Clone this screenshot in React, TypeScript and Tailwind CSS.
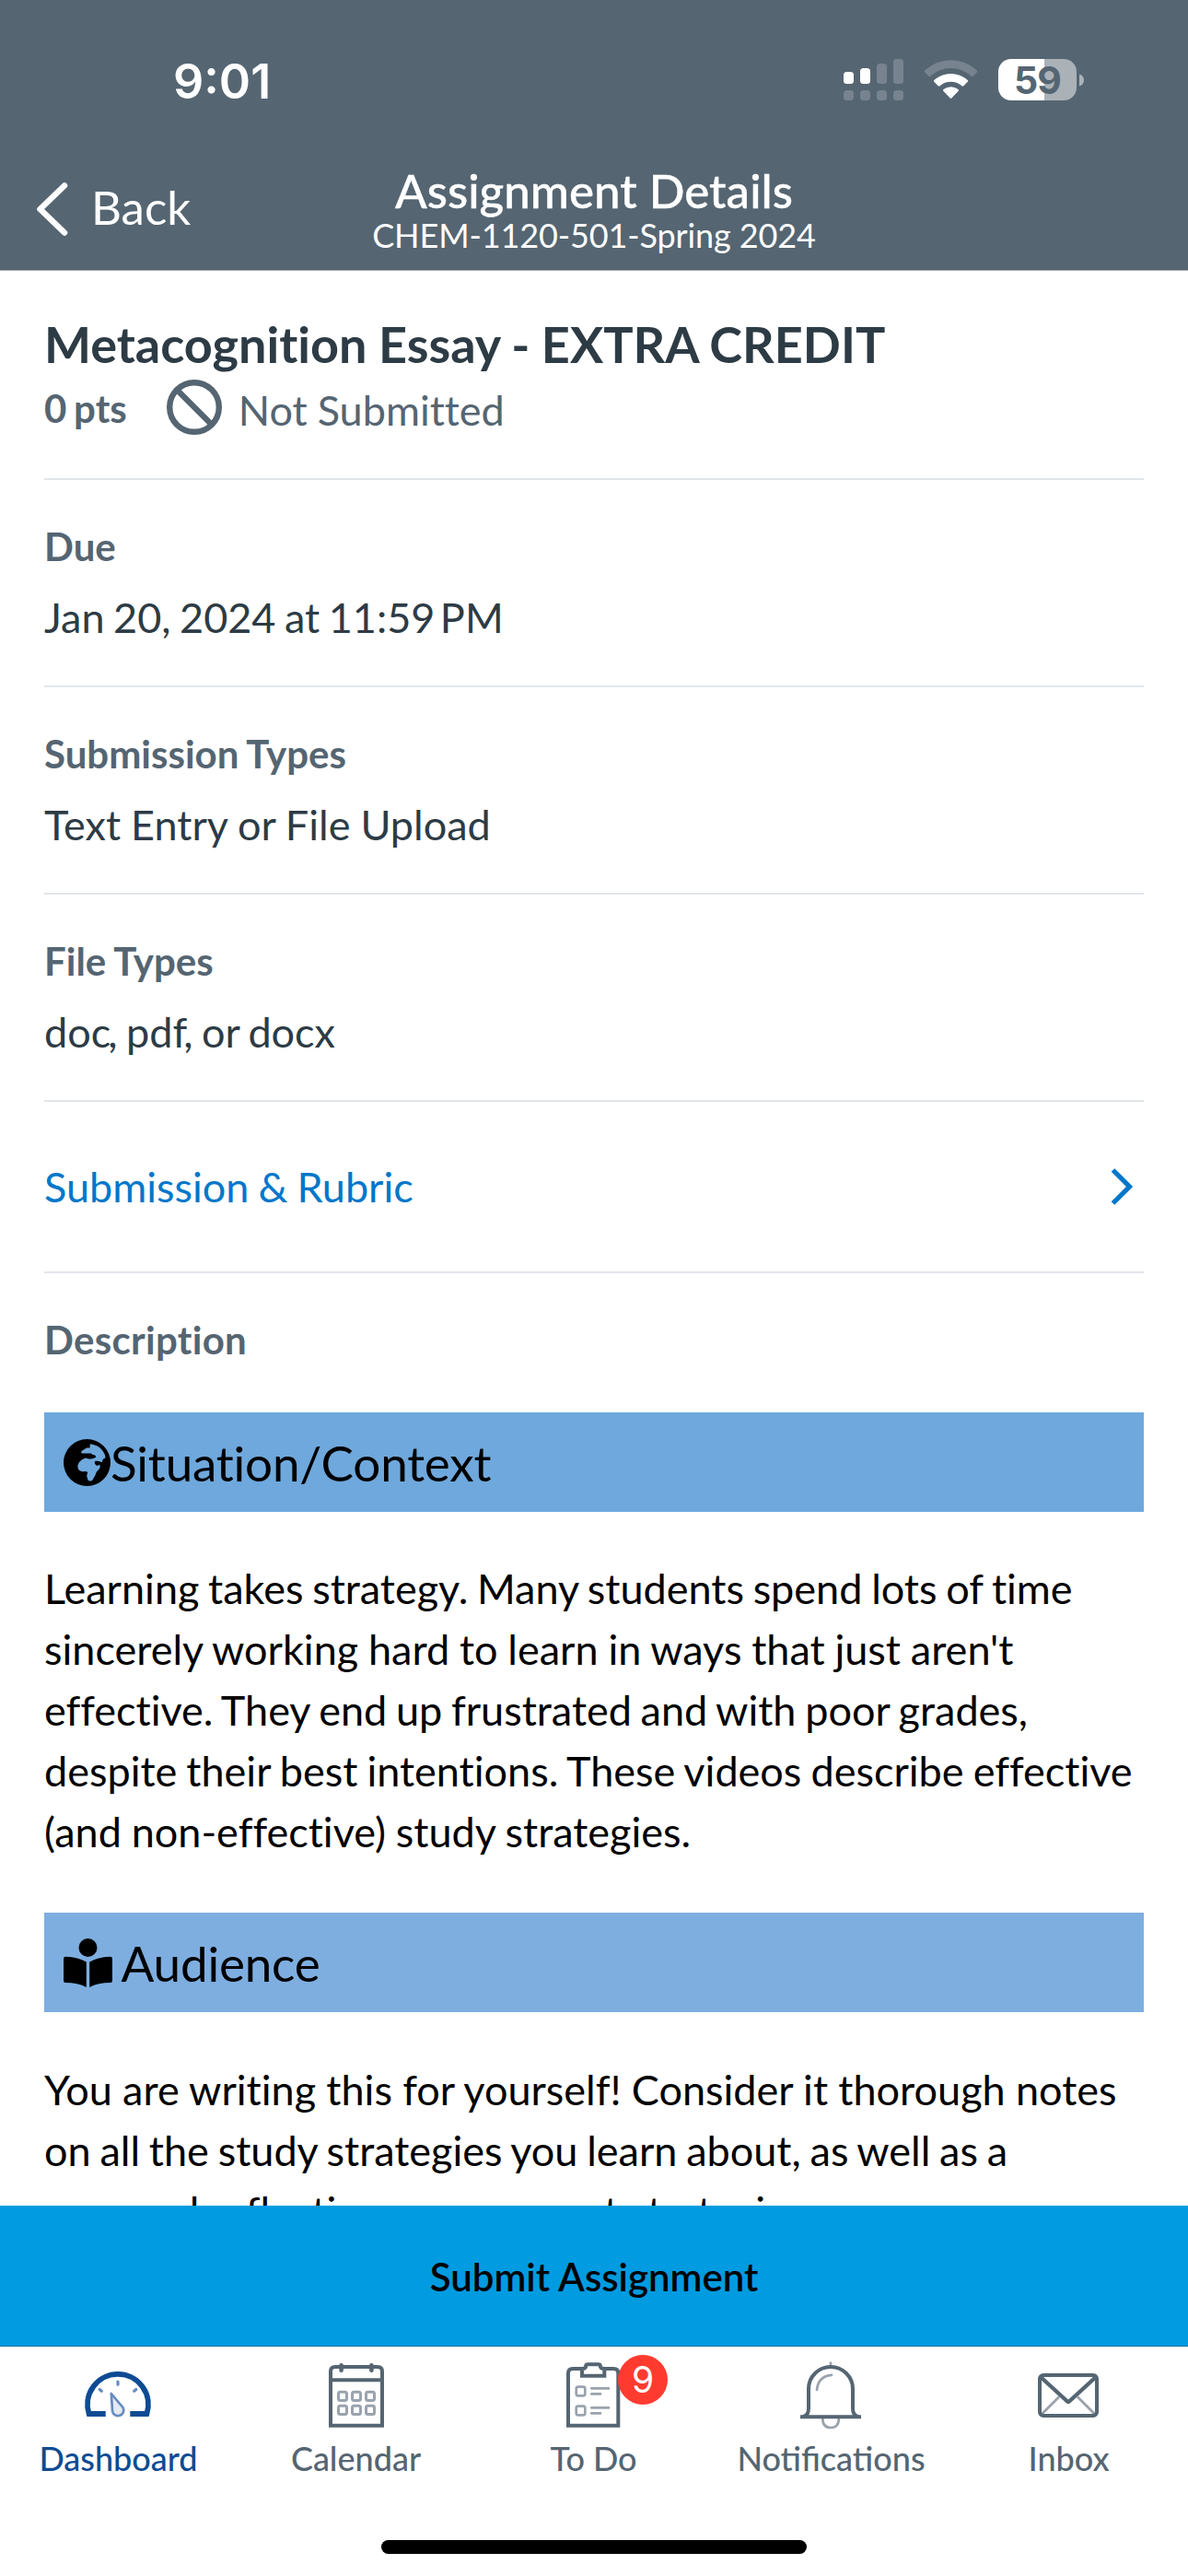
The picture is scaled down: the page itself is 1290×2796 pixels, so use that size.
import { FC, ReactNode } from "react";

import clsx from "clsx";

type SectionProps = {
  label: string;
  children: ReactNode;
};

type BannerProps = {
  icon: ReactNode;
  title: string;
  className: string;
};

type TabProps = {
  label: string;
  icon: ReactNode;
  active?: boolean;
  badge?: number;
};

const StatusIcons = () => (
  <svg width="262" height="46" viewBox="0 0 262 46" className="mt-[64px]">
    <g fill="#fff">
      <rect x="0" y="14" width="11" height="13" rx="3.5" />
      <rect x="18" y="10" width="11" height="17" rx="3.5" />
      <g fillOpacity="0.2">
        <rect x="36" y="5" width="11" height="22" rx="3.5" />
        <rect x="54" y="0" width="11" height="27" rx="3.5" />
        <rect x="0" y="34" width="11" height="11" rx="3.5" />
        <rect x="18" y="34" width="11" height="11" rx="3.5" />
        <rect x="36" y="34" width="11" height="11" rx="3.5" />
        <rect x="54" y="34" width="11" height="11" rx="3.5" />
        <path d="M88.4 14.7Q87 13.4 88.6 12A41.5 41.5 0 0 1 144.4 12Q146 13.4 144.6 14.7L140.6 18.7Q139.6 19.6 138.4 18.6A32.5 32.5 0 0 0 94.6 18.6Q93.4 19.6 92.4 18.7Z" />
      </g>
      <path d="M98.3 24.8Q97.4 23.8 98.5 22.8A27 27 0 0 1 134.5 22.8Q135.6 23.8 134.7 24.8L130.3 29.2Q129.4 30 128.4 29.2A18 18 0 0 0 104.6 29.2Q103.6 30 102.7 29.2Z" />
      <path d="M108.3 34.7Q107.6 33.8 108.5 33.1A12.6 12.6 0 0 1 124.5 33.1Q125.4 33.8 124.7 34.7L117.3 42.4Q116.5 43.2 115.7 42.4Z" />
    </g>
    <clipPath id="battery">
      <rect x="168" y="0" width="85" height="45" rx="14" />
    </clipPath>
    <g clipPath="url(#battery)">
      <rect x="168" y="0" width="50" height="45" fill="#fff" />
      <rect x="218" y="0" width="35" height="45" fill="#aab2b8" />
    </g>
    <path d="M256 16.5Q261 18 261 23T256 29.5Z" fill="#aab2b8" />
    <text
      x="210.5"
      y="37.5"
      textAnchor="middle"
      className="fill-[#556572] font-[Inter,sans-serif] text-[41px] font-bold tracking-[-1px]"
    >
      59
    </text>
  </svg>
);

const GlobeIcon = () => (
  <svg width="51" height="51" viewBox="87 98 152 152">
    <path
      fillRule="evenodd"
      d="M163 98a76 76 0 1 0 0 152a76 76 0 1 0 0-152Z
        M173 114Q200 118 212 134Q222 146 223 158L215 163L211 173Q202 167 190 169L187 175L192 183L199 184L204 180Q207 186 203 194Q191 205 190 214L180 231Q172 237 166 230L162 217L165 206Q162 200 152 203Q140 204 134 194Q131 182 137 173Q146 162 158 159L166 161Q180 164 192 157Q192 150 182 149L176 144H146Q141 139 150 134L162 126H172Z"
    />
  </svg>
);

const ReaderIcon = () => (
  <svg width="53" height="53" viewBox="0 0 53 53">
    <circle cx="26.5" cy="10" r="10" />
    <path d="M0 22Q0 19.8 2.4 19.8Q16 20.3 24.8 25.5V53Q16 48 2 48Q0 48 0 45.5Z" />
    <path d="M53 22Q53 19.8 50.6 19.8Q37 20.3 28.2 25.5V53Q37 48 51 48Q53 48 53 45.5Z" />
  </svg>
);

const DashboardIcon = () => (
  <svg width="80" height="80" viewBox="-40 0 80 80" fill="none">
    <path d="M-14.3 60H-32.4A33 33 0 1 1 30.4 60H12.3" stroke="#0e4b93" strokeWidth="5.8" />
    <g stroke="#668cbf" strokeLinecap="round" strokeWidth="3.2">
      <path d="M-1 25V28.2M-20.8 33.5L-18.7 35.3M18.8 33.5L16.7 35.3" />
    </g>
    <path
      d="M-8.2 38L-6.9 57.5A6.2 6.2 0 1 0 4.8 53.5Z"
      fill="#e4eaf3"
      stroke="#668cbf"
      strokeWidth="2.7"
      strokeLinejoin="round"
    />
  </svg>
);

const CalendarIcon = () => (
  <svg width="80" height="80" viewBox="-40 0 80 80" fill="none" stroke="#556572">
    <path d="M-28 72.8V14Q-28 9 -23 9H23Q28 9 28 14V72.8ZM-28 23.3H28" strokeWidth="4" />
    <path d="M-16.4 7.2V12.8M16.4 7.2V12.8" strokeWidth="4.6" strokeLinecap="round" />
    <g stroke="#9aa3ad" strokeWidth="3">
      {[36.2, 51.2].map((y) =>
        [-19.5, -4.5, 10.5].map((x) => (
          <rect key={`${x}-${y}`} x={x} y={y} width="9" height="9.2" rx="2" />
        )),
      )}
    </g>
  </svg>
);

const TodoIcon = () => (
  <svg width="80" height="80" viewBox="-40 0 80 80" fill="none" stroke="#556572" strokeWidth="4">
    <path d="M-14 11H-23Q-28 11 -28 16V72.8H26.3V16Q26.3 11 21.3 11H12" />
    <path d="M-13 18.8V11Q-8.8 11 -8.8 8Q-8.8 6.3 -6.5 6.3H4.5Q6.8 6.3 6.8 8Q6.8 11 11.3 11V18.8Z" />
    <g stroke="#9aa3ad" strokeWidth="2.7">
      <rect x="-19.3" y="30.7" width="9.6" height="9.6" rx="2" />
      <rect x="-19.3" y="51.7" width="9.6" height="9.6" rx="2" />
      <path strokeLinecap="round" d="M-2.7 32.4H16M-2.7 38.4H7M-2.7 53.4H16M-2.7 59.4H7" />
    </g>
  </svg>
);

const BellIcon = () => (
  <svg width="80" height="80" viewBox="-40 0 80 80" fill="none" stroke="#556572" strokeWidth="4">
    <g stroke="#9aa3ad" strokeWidth="2.7">
      <path d="M-1 3.5V8" />
      <path strokeLinecap="round" d="M0 17.8Q-14.5 19 -16 34M-9.7 65Q-9.7 75 -1 75T7.9 65" />
    </g>
    <path d="M-34 63.2H32M-31 63Q-25 62 -25 54V33A24 24 0 0 1 23 33V54Q23 62 29 63" />
  </svg>
);

const InboxIcon = () => (
  <svg width="80" height="80" viewBox="-40 0 80 80" fill="none" stroke="#556572" strokeWidth="4">
    <path d="M-31 61.5L-11 41.5M29 61.5L9 41.5" stroke="#9aa3ad" strokeWidth="2.8" />
    <rect x="-32" y="18" width="62" height="44" rx="4" />
    <path d="M-31 20L-2.6 46Q-1 47.6 0.6 46L29 20" strokeWidth="4.4" />
  </svg>
);

const Section: FC<SectionProps> = ({ label, children }) => (
  <section className="h-[225px] border-b-2 border-[#e2e6ea] pt-[47px]">
    <h2 className="text-[42px] leading-[50px] font-bold text-[#556572] [word-spacing:-1px]">{label}</h2>
    <p className="mt-[25px] text-[45px] leading-[54px]">{children}</p>
  </section>
);

const Banner: FC<BannerProps> = ({ icon, title, className }) => (
  <h3
    className={clsx(
      "flex h-[108px] items-center pl-[21px] text-[53px] leading-[61px] tracking-[-0.2px] text-black",
      className,
    )}
  >
    {icon}
    <span className="[word-spacing:-2px]">{title}</span>
  </h3>
);

const Tab: FC<TabProps> = ({ label, icon, active, badge }) => (
  <div
    className={clsx(
      "relative flex flex-1 flex-col items-center pt-[13px]",
      active ? "text-[#0e4b93]" : "text-[#556572]",
    )}
  >
    {icon}
    <span className="mt-[6px] mr-px text-[36px] leading-[44px] font-medium">{label}</span>
    {badge ? (
      <span className="absolute top-[9px] left-[155px] flex size-[54px] items-center justify-center rounded-full bg-[#ff3b30] font-[Inter,sans-serif] text-[39px] text-white">
        {badge}
      </span>
    ) : null}
  </div>
);

const App = () => {
  return (
    <div className="flex h-[2796px] w-[1290px] flex-col overflow-hidden bg-white font-[Lato,sans-serif] text-[#2d3b45]">
      <header className="h-[294px] shrink-0 border-b border-[#a5adb4] bg-[#556572] text-white">
        <div className="flex h-[172px] justify-between pr-[112px] pl-[188px]">
          <span className="mt-[58px] font-[Inter,sans-serif] text-[52px] leading-[62px] font-semibold">9:01</span>
          <StatusIcons />
        </div>
        <div className="grid h-[121px] grid-cols-[1fr_auto_1fr]">
          <div className="flex items-start pl-[39px]">
            <svg width="36" height="60" viewBox="0 0 36 60" fill="none" className="mt-[25px]">
              <path
                d="M31 4.5L4.5 30L31 55.5"
                stroke="#fff"
                strokeWidth="6.5"
                strokeLinecap="round"
                strokeLinejoin="round"
              />
            </svg>
            <span className="mt-[22px] ml-[24px] text-[51px] leading-[61px]">Back</span>
          </div>
          <div className="flex flex-col items-center pt-[4px]">
            <h1 className="text-[51px] leading-[61px] font-medium tracking-[0.05px] [-webkit-text-stroke:0.4px_white]">
              Assignment Details
            </h1>
            <p className="mt-[-3px] text-[36px] leading-[43px] tracking-[-0.12px]">CHEM-1120-501-Spring 2024</p>
          </div>
          <div />
        </div>
      </header>

      <main className="h-[2100px] shrink-0 overflow-hidden px-12 [font-variant-ligatures:none]">
        <section className="h-[227px] border-b-2 border-[#e2e6ea] pt-[48px]">
          <h2 className="text-[54px] leading-[64px] font-bold [word-spacing:-0.7px]">
            Metacognition Essay - EXTRA CREDIT
          </h2>
          <div className="flex text-[#556572]">
            <span className="mt-[12px] text-[42px] leading-[50px] font-bold [word-spacing:-2.5px]">0 pts</span>
            <svg width="60" height="60" viewBox="0 0 60 60" fill="none" className="mt-[6px] ml-[43px]">
              <circle cx="30" cy="30" r="26.8" stroke="#556572" strokeWidth="6.4" />
              <path d="M12 12L48 48" stroke="#556572" strokeWidth="6.4" />
            </svg>
            <span className="mt-[12px] ml-[18px] text-[45px] leading-[54px] [word-spacing:-0.5px]">Not Submitted</span>
          </div>
        </section>

        <Section label="Due">
          <span className="[word-spacing:-2px]">Jan 20, 2024 at 11:59</span>
          <span className="[word-spacing:-6px]"> PM</span>
        </Section>
        <Section label="Submission Types">
          <span className="[word-spacing:-0.5px]">Text Entry or File Upload</span>
        </Section>
        <Section label="File Types">
          <span className="[word-spacing:-2px]">
            do<span className="tracking-[-3px]">c</span>, pd<span className="tracking-[-4px]">f</span>, or docx
          </span>
        </Section>

        <section className="flex h-[186px] items-center justify-between border-b-2 border-[#e2e6ea] pr-[11px] text-[#0277c9]">
          <span className="text-[45px] leading-[54px] [word-spacing:-1.5px]">Submission &amp; Rubric</span>
          <svg width="26" height="42" viewBox="0 0 26 42" fill="none">
            <path d="M3.5 3L21.5 21L3.5 39" stroke="currentColor" strokeWidth="5.2" />
          </svg>
        </section>

        <section className="pt-[47px]">
          <h2 className="text-[42px] leading-[50px] font-bold tracking-[0.3px] text-[#556572]">Description</h2>
          <div className="mt-[54px] text-[45px] leading-[66px] text-black">
            <Banner icon={<GlobeIcon />} title="Situation/Context" className="bg-[#6fa8dc]" />
            <p className="mt-[50px] mb-[55px] whitespace-nowrap">
              <span className="[word-spacing:-1.8px]">Learning takes strategy. Many students spend lots of time</span>
              <br />
              <span className="[word-spacing:-0.7px]">sincerely working hard to learn in ways that just aren't</span>
              <br />
              <span className="[word-spacing:-1.8px]">effective. They end up frustrated and with poor grades,</span>
              <br />
              <span className="[word-spacing:-1.4px]">
                despite their best intentions. These videos describe effective
              </span>
              <br />
              <span className="[word-spacing:-0.7px]">(and non-effective) study strategies.</span>
            </p>
            <Banner icon={<ReaderIcon />} title={"\u00a0Audience"} className="bg-[#7eaee0]" />
            <p className="mt-[51px] whitespace-nowrap">
              <span className="[word-spacing:-0.2px]">
                You are writing this for yourself! Consider it thorough notes
              </span>
              <br />
              <span className="[word-spacing:-1.7px]">on all the study strategies you learn about, as well as a</span>
              <br />
              personal reflection on your past strategies.
            </p>
          </div>
        </section>
      </main>

      <button className="h-[153px] shrink-0 border-b border-[#00739f] bg-[#009be0] pt-px text-[42px] leading-[50px] font-semibold text-black">
        Submit Assignment
      </button>

      <nav className="flex h-[210px] shrink-0">
        <Tab label="Dashboard" icon={<DashboardIcon />} active />
        <Tab label="Calendar" icon={<CalendarIcon />} />
        <Tab label="To Do" icon={<TodoIcon />} badge={9} />
        <Tab label="Notifications" icon={<BellIcon />} />
        <Tab label="Inbox" icon={<InboxIcon />} />
      </nav>
      <div className="mx-auto h-[15px] w-[462px] shrink-0 rounded-full bg-black" />
    </div>
  );
};

export default App;
